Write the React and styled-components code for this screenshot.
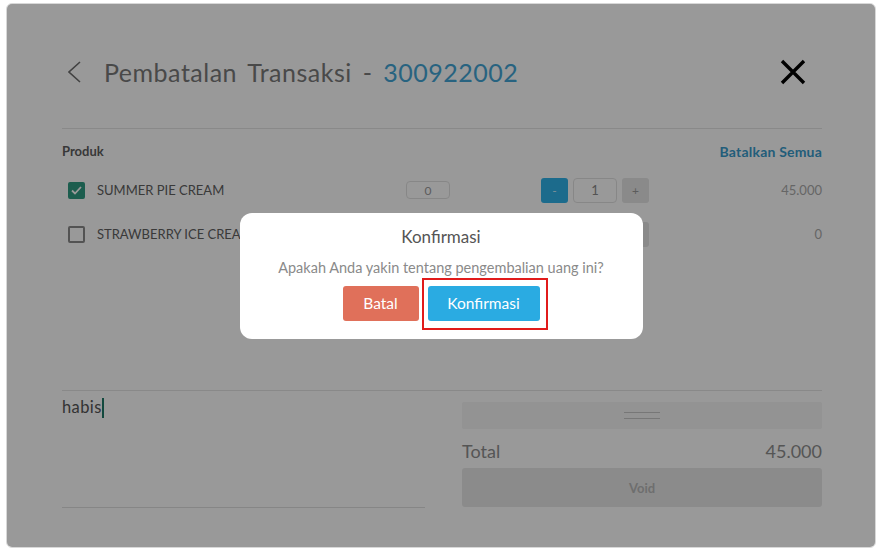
import React from "react";
import styled, { createGlobalStyle } from "styled-components";

const GlobalStyle = createGlobalStyle`
  * { box-sizing: border-box; }
  body {
    margin: 0;
    background: #ffffff;
    font-family: "Lato", "Open Sans", sans-serif;
  }
`;

const Page = styled.div`
  width: 880px;
  height: 552px;
  padding: 3px 4px 4px 6px;
`;

const Frame = styled.div`
  position: relative;
  width: 870px;
  height: 545px;
  border: 1px solid #d8d8d8;
  border-radius: 6px;
  background: #ffffff;
  overflow: hidden;
  display: flex;
  flex-direction: column;
  padding: 0 53px 39px 55px;
`;

const Header = styled.div`
  display: flex;
  align-items: center;
  height: 40px;
  margin-top: 48px;
  margin-bottom: 36px;
`;

const BackButton = styled.button`
  border: none;
  background: none;
  padding: 0;
  margin: 0 23px 0 6px;
  display: flex;
  align-items: center;
`;

const Title = styled.h1`
  flex: 1;
  margin: 0;
  font-size: 25px;
  font-weight: 400;
  color: #7a7a7a;
  letter-spacing: 0.5px;
  word-spacing: 4px;

  span {
    color: #44a6d6;
  }
`;

const CloseButton = styled.button`
  border: none;
  background: none;
  padding: 0;
  margin-right: 16px;
  display: flex;
`;

const Divider = styled.div`
  height: 1px;
  background: #e4e4e4;
`;

const TableHead = styled.div`
  display: flex;
  justify-content: space-between;
  align-items: center;
  height: 18px;
  margin-top: 13px;
  margin-bottom: 8px;
  font-size: 13px;
  font-weight: 700;
  color: #5e5e5e;
`;

const LinkText = styled.span`
  font-size: 14px;
  color: #3a9ccc;
  letter-spacing: 0.2px;
`;

const ProductList = styled.div`
  flex: 1;
`;

const Row = styled.div`
  display: grid;
  grid-template-columns: 344px 44px 91px 108px 1fr;
  align-items: center;
  height: 44px;
`;

const Product = styled.label`
  display: flex;
  align-items: center;
  gap: 12px;
  padding-left: 6px;
  font-size: 13px;
  color: #616161;
  white-space: nowrap;
`;

const Check = styled.span`
  width: 17px;
  height: 17px;
  border-radius: 2px;
  display: flex;
  align-items: center;
  justify-content: center;
  background: ${(p) => (p.checked ? "#2f9c82" : "#ffffff")};
  border: 2px solid ${(p) => (p.checked ? "#2f9c82" : "#8a8a8a")};
`;

const QtyBox = styled.div`
  height: 18px;
  border: 1px solid #e2e2e2;
  border-radius: 4px;
  font-size: 12px;
  color: #9a9a9a;
  display: flex;
  align-items: center;
  justify-content: center;
`;

const Stepper = styled.div`
  display: flex;
  gap: 5px;
`;

const StepButton = styled.button`
  width: 27px;
  height: 25px;
  border: none;
  border-radius: 3px;
  padding: 0;
  font-family: inherit;
  font-size: 12px;
  color: ${(p) => (p.active ? "#cfeefc" : "#9a9a9a")};
  background: ${(p) => (p.active ? "#2fb2ea" : "#e6e6e6")};
`;

const StepInput = styled.div`
  width: 44px;
  height: 25px;
  border: 1px solid #e2e2e2;
  border-radius: 4px;
  font-size: 13px;
  color: #8a8a8a;
  display: flex;
  align-items: center;
  justify-content: center;
`;

const Price = styled.div`
  text-align: right;
  font-size: 13px;
  color: #aaaaaa;
`;

const Bottom = styled.div`
  display: grid;
  grid-template-columns: 363px 360px;
  justify-content: space-between;
  border-top: 1px solid #e4e4e4;
`;

const Note = styled.div`
  height: 117px;
  border-bottom: 1px solid #e0e0e0;
  padding-top: 6px;
  font-size: 16.5px;
  letter-spacing: 0.4px;
  color: #555555;
  display: flex;
  align-items: flex-start;
`;

const Caret = styled.span`
  display: inline-block;
  width: 2px;
  height: 20px;
  margin-top: 1px;
  background: #1f7a68;
`;

const Summary = styled.div`
  padding-top: 11px;
  display: flex;
  flex-direction: column;
`;

const Handle = styled.div`
  height: 27px;
  border-radius: 2px;
  background: #f5f5f5;
  display: flex;
  flex-direction: column;
  align-items: center;
  justify-content: center;
  gap: 5px;

  i {
    display: block;
    width: 36px;
    height: 1px;
    background: #c6c6c6;
  }
`;

const TotalRow = styled.div`
  height: 39px;
  display: flex;
  justify-content: space-between;
  align-items: center;
  padding-top: 4px;
  font-size: 18px;
  color: #8e8e8e;
`;

const VoidButton = styled.button`
  height: 39px;
  border: none;
  border-radius: 3px;
  background: #e8e8e8;
  font-family: inherit;
  font-size: 13px;
  font-weight: 700;
  color: #b8b8b8;
`;

const Overlay = styled.div`
  position: absolute;
  inset: 0;
  background: rgba(0, 0, 0, 0.4);
  display: flex;
  align-items: center;
  justify-content: center;
`;

const Modal = styled.div`
  width: 403px;
  height: 126px;
  background: #ffffff;
  border-radius: 12px;
  padding-top: 12px;
  display: flex;
  flex-direction: column;
  align-items: center;
`;

const ModalTitle = styled.div`
  font-size: 17px;
  line-height: 24px;
  color: #555555;
`;

const ModalText = styled.div`
  margin-top: 9px;
  font-size: 14.5px;
  line-height: 20px;
  color: #8a8a8a;
`;

const ModalActions = styled.div`
  margin-top: 8px;
  display: flex;
  gap: 9px;
`;

const ModalButton = styled.button`
  position: relative;
  height: 35px;
  width: ${(p) => p.width}px;
  border: none;
  border-radius: 3px;
  font-family: inherit;
  font-size: 15.5px;
  color: #ffffff;
  background: ${(p) => p.color};

  ${(p) =>
    p.highlight &&
    `
    &::after {
      content: "";
      position: absolute;
      top: -8px;
      left: -6px;
      right: -8px;
      bottom: -9px;
      border: 2px solid #e11b1b;
    }
  `}
`;

const products = [
  { name: "SUMMER PIE CREAM", checked: true, qty: 0, count: 1, price: "45.000" },
  { name: "STRAWBERRY ICE CREAM", checked: false, qty: 0, count: 0, price: "0" },
];

const App = () => {
  return (
    <Page>
      <GlobalStyle />
      <Frame>
        <Header>
          <BackButton>
            <svg width="13" height="22" viewBox="0 0 13 22">
              <polyline points="12,1 1,11 12,21" fill="none" stroke="#6e6e6e" strokeWidth="1.6" />
            </svg>
          </BackButton>
          <Title>
            Pembatalan Transaksi - <span>300922002</span>
          </Title>
          <CloseButton>
            <svg width="26" height="26" viewBox="0 0 26 26">
              <path d="M2 2 L24 24 M24 2 L2 24" stroke="#000" strokeWidth="3.4" />
            </svg>
          </CloseButton>
        </Header>
        <Divider />
        <TableHead>
          <span>Produk</span>
          <LinkText>Batalkan Semua</LinkText>
        </TableHead>
        <ProductList>
          {products.map((item) => (
            <Row key={item.name}>
              <Product>
                <Check checked={item.checked}>
                  {item.checked && (
                    <svg width="11" height="9" viewBox="0 0 11 9">
                      <polyline points="1,4.5 4,7.5 10,1" fill="none" stroke="#fff" strokeWidth="1.8" />
                    </svg>
                  )}
                </Check>
                {item.name}
              </Product>
              <QtyBox>{item.qty}</QtyBox>
              <span />
              <Stepper>
                <StepButton active={item.count > 0}>-</StepButton>
                <StepInput>{item.count}</StepInput>
                <StepButton>+</StepButton>
              </Stepper>
              <Price>{item.price}</Price>
            </Row>
          ))}
        </ProductList>
        <Bottom>
          <Note>
            habis
            <Caret />
          </Note>
          <Summary>
            <Handle>
              <i />
              <i />
            </Handle>
            <TotalRow>
              <span>Total</span>
              <span>45.000</span>
            </TotalRow>
            <VoidButton>Void</VoidButton>
          </Summary>
        </Bottom>
        <Overlay>
          <Modal>
            <ModalTitle>Konfirmasi</ModalTitle>
            <ModalText>Apakah Anda yakin tentang pengembalian uang ini?</ModalText>
            <ModalActions>
              <ModalButton width={76} color="#e0705a">
                Batal
              </ModalButton>
              <ModalButton width={112} color="#2aabe2" highlight>
                Konfirmasi
              </ModalButton>
            </ModalActions>
          </Modal>
        </Overlay>
      </Frame>
    </Page>
  );
};

export default App;
